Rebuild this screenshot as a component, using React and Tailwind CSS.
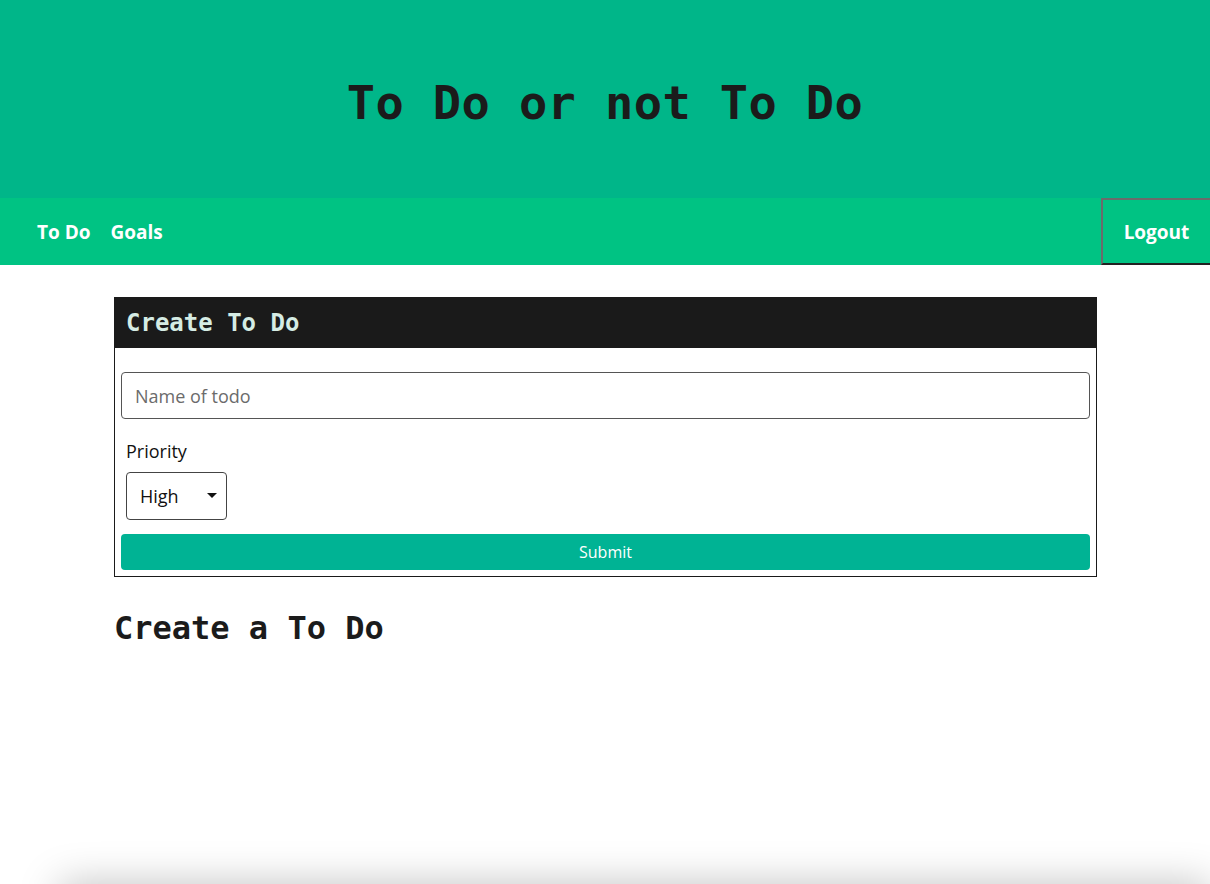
export default function App() {
  const mono = "font-['DejaVu_Sans_Mono','Liberation_Mono',monospace]";
  return (
    <div className="min-h-[884px] bg-white font-['Open_Sans',sans-serif] overflow-hidden">
      {/* header */}
      <header className="h-[198px] bg-[#00b689] flex items-center justify-center">
        <h1 className={`${mono} text-[47px] font-bold text-[#1b1b1b] tracking-[0.4px] pt-[8px]`}>
          To Do or not To Do
        </h1>
      </header>

      {/* nav */}
      <nav className="h-[67px] bg-[#00c383] flex items-stretch justify-between">
        <div className="flex items-center gap-5 pl-[37px] pt-[2px] text-[19px] font-bold text-white">
          <span>To Do</span>
          <span>Goals</span>
        </div>
        <button className="w-[109px] flex items-center justify-center pt-[2px] text-[19px] font-bold text-white border-l-2 border-t-2 border-b-2 border-l-[#6b6b6b] border-t-[#6b6b6b] border-b-[#222]">
          Logout
        </button>
      </nav>

      <main className="h-[619px] px-[114px] pt-[32px]">
        <div className="w-[983px] border border-[#1a1a1a]">
          <div className="h-[50px] bg-[#1a1a1a] flex items-center px-[11px]">
            <h2 className={`${mono} text-[24px] font-bold text-[#d5ece4]`}>Create To Do</h2>
          </div>
          <div className="px-[6px] pt-[24px] pb-[6px]">
            <input
              placeholder="Name of todo"
              className="w-full h-[47px] rounded-[4px] border border-[#555] px-[13px] text-[18px] text-[#222] placeholder:text-[#6b6b6b] outline-none"
            />
            <div className="px-[5px] pt-[20px]">
              <div className="text-[18px] text-[#111] leading-[24px]">Priority</div>
              <div className="mt-[9px] w-[101px] h-[48px] rounded-[4px] border border-[#444] flex items-center justify-between pl-[13px] pr-[9px]">
                <span className="text-[18px] text-[#111]">High</span>
                <svg width="10" height="6" viewBox="0 0 10 6">
                  <path d="M0 0 L10 0 L5 5 Z" fill="#111" />
                </svg>
              </div>
            </div>
            <button className="mt-[14px] w-full h-[36px] rounded-[4px] bg-[#00b394] text-white text-[16px]">
              Submit
            </button>
          </div>
        </div>
        <h2 className={`${mono} mt-[27px] text-[32px] font-bold text-[#1b1b1b]`}>Create a To Do</h2>
      </main>

      <div className="ml-[60px] h-[40px] bg-white shadow-[0_0_40px_rgba(0,0,0,0.25)]" />
    </div>
  );
}
